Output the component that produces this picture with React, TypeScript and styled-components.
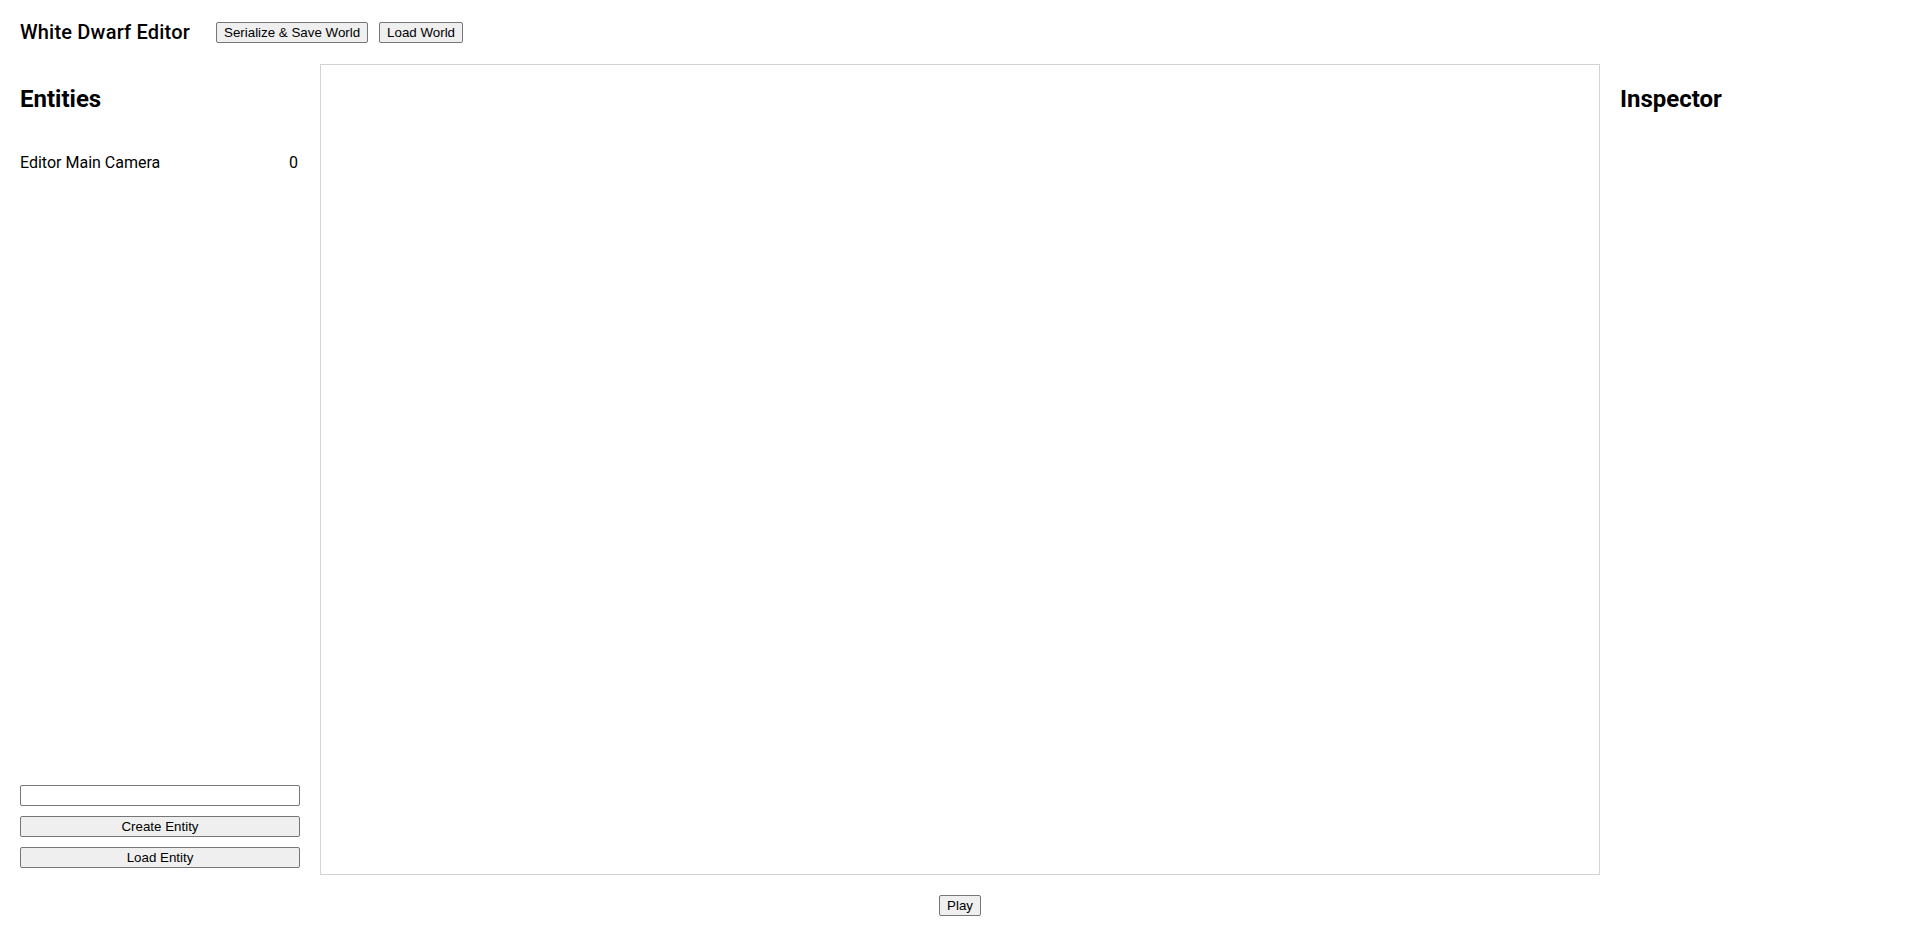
import React, { useState } from "react";
import styled, { createGlobalStyle } from "styled-components";

const GlobalStyle = createGlobalStyle`
  html, body {
    margin: 0;
    padding: 0;
    background: #fff;
    color: #000;
    font-family: Roboto, "Liberation Sans", Arial, sans-serif;
  }
`;

const App = () => {
  const [entityName, setEntityName] = useState("");
  const entities = [{ name: "Editor Main Camera", id: 0 }];

  return (
    <>
      <GlobalStyle />
      <Page>
        <Header>
          <Title>White Dwarf Editor</Title>
          <NativeButton $gap={26}>Serialize &amp; Save World</NativeButton>
          <NativeButton $gap={11}>Load World</NativeButton>
        </Header>

        <Main>
          <Sidebar>
            <div>
              <PanelHeading>Entities</PanelHeading>
              <EntityList>
                {entities.map((e) => (
                  <EntityRow key={e.id}>
                    <span>{e.name}</span>
                    <span>{e.id}</span>
                  </EntityRow>
                ))}
              </EntityList>
            </div>
            <SidebarControls>
              <NameInput
                value={entityName}
                onChange={(ev) => setEntityName(ev.target.value)}
              />
              <WideButton>Create Entity</WideButton>
              <WideButton>Load Entity</WideButton>
            </SidebarControls>
          </Sidebar>

          <Viewport />

          <Inspector>
            <PanelHeading>Inspector</PanelHeading>
          </Inspector>
        </Main>

        <Footer>
          <NativeButton>Play</NativeButton>
        </Footer>
      </Page>
    </>
  );
};

const Page = styled.div`
  width: 1920px;
  height: 937px;
  box-sizing: border-box;
  padding: 0 20px;
  display: flex;
  flex-direction: column;
  overflow: hidden;
`;

const Header = styled.header`
  height: 64px;
  display: flex;
  align-items: center;
`;

const Title = styled.h1`
  margin: 0;
  font-size: 20px;
  font-weight: 500;
  letter-spacing: 0.2px;
`;

const NativeButton = styled.button<{ $gap?: number }>`
  margin: 0 0 0 ${(p) => p.$gap ?? 0}px;
  height: 21px;
  padding: 1px 7px;
  font: 13.333px "Liberation Sans", Arial, sans-serif;
  color: #000;
  background: #efefef;
  border: 1px solid #767676;
  border-radius: 2px;
  cursor: pointer;
`;

const Main = styled.main`
  display: flex;
  gap: 20px;
  height: 811px;
`;

const Sidebar = styled.aside`
  width: 280px;
  flex-shrink: 0;
  display: flex;
  flex-direction: column;
  justify-content: space-between;
  padding-bottom: 7px;
  box-sizing: border-box;
`;

const PanelHeading = styled.h2`
  margin: 21px 0 0;
  height: 28px;
  line-height: 28px;
  font-size: 24px;
  font-weight: 700;
`;

const EntityList = styled.ul`
  list-style: none;
  margin: 40px 0 0;
  padding: 0;
`;

const EntityRow = styled.li`
  display: flex;
  justify-content: space-between;
  font-size: 16px;
  line-height: 19px;
  padding-right: 2px;
`;

const SidebarControls = styled.div`
  display: flex;
  flex-direction: column;
  gap: 10px;
`;

const NameInput = styled.input`
  box-sizing: border-box;
  width: 100%;
  height: 21px;
  margin: 0;
  padding: 1px 2px;
  font: 13.333px "Liberation Sans", Arial, sans-serif;
  border: 1px solid #767676;
  border-radius: 2px;
  background: #fff;
`;

const WideButton = styled(NativeButton)`
  width: 100%;
`;

const Viewport = styled.div`
  flex: 1;
  border: 1px solid #d3d3d3;
  box-sizing: border-box;
`;

const Inspector = styled.aside`
  width: 280px;
  flex-shrink: 0;
`;

const Footer = styled.footer`
  display: flex;
  justify-content: center;
  padding-top: 20px;
`;

export default App;
